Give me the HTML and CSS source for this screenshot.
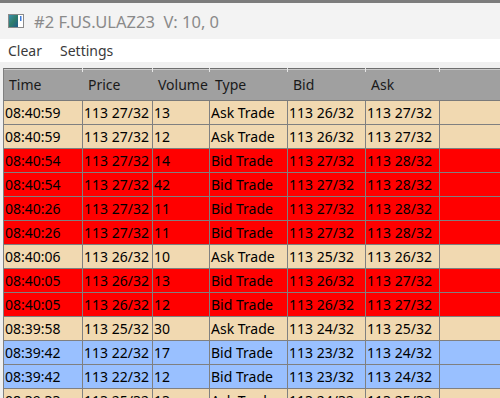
FILE: index.html
```html
<!DOCTYPE html>
<html>
<head>
<meta charset="utf-8">
<link rel="stylesheet" href="styles.css">
</head>
<body>
<div class="window">
  <div class="titlebar">
    <svg class="app-icon" width="16" height="16" viewBox="0 0 16 16">
      <defs>
        <linearGradient id="g" x1="0" y1="0" x2="1" y2="1">
          <stop offset="0" stop-color="#3a8fb0"/>
          <stop offset="0.5" stop-color="#2f7d6a"/>
          <stop offset="1" stop-color="#1f5a8c"/>
        </linearGradient>
      </defs>
      <rect x="0.5" y="1.5" width="15" height="13" fill="#fff" stroke="#8a8a8a"/>
      <rect x="1" y="2" width="9" height="12" fill="url(#g)"/>
      <rect x="12" y="3" width="1.5" height="5" fill="#3d7bd9"/>
    </svg>
    <span class="title">#2 F.US.ULAZ23&nbsp;&nbsp;V: 10, 0</span>
  </div>
  <div class="menubar">
    <span class="menu-item">Clear</span>
    <span class="menu-item">Settings</span>
  </div>
  <div class="gap-strip"></div>
  <div class="grid-wrap">
    <div class="grid">
      <div class="row head">
        <div class="cell">Time</div><div class="cell">Price</div><div class="cell">Volume</div><div class="cell">Type</div><div class="cell">Bid</div><div class="cell">Ask</div><div class="cell fill"></div>
      </div>
      <div class="row ask"><div class="cell">08:40:59</div><div class="cell">113 27/32</div><div class="cell">13</div><div class="cell">Ask Trade</div><div class="cell">113 26/32</div><div class="cell">113 27/32</div><div class="cell fill"></div></div>
      <div class="row ask"><div class="cell">08:40:59</div><div class="cell">113 27/32</div><div class="cell">12</div><div class="cell">Ask Trade</div><div class="cell">113 26/32</div><div class="cell">113 27/32</div><div class="cell fill"></div></div>
      <div class="row bid"><div class="cell">08:40:54</div><div class="cell">113 27/32</div><div class="cell">14</div><div class="cell">Bid Trade</div><div class="cell">113 27/32</div><div class="cell">113 28/32</div><div class="cell fill"></div></div>
      <div class="row bid"><div class="cell">08:40:54</div><div class="cell">113 27/32</div><div class="cell">42</div><div class="cell">Bid Trade</div><div class="cell">113 27/32</div><div class="cell">113 28/32</div><div class="cell fill"></div></div>
      <div class="row bid"><div class="cell">08:40:26</div><div class="cell">113 27/32</div><div class="cell">11</div><div class="cell">Bid Trade</div><div class="cell">113 27/32</div><div class="cell">113 28/32</div><div class="cell fill"></div></div>
      <div class="row bid"><div class="cell">08:40:26</div><div class="cell">113 27/32</div><div class="cell">11</div><div class="cell">Bid Trade</div><div class="cell">113 27/32</div><div class="cell">113 28/32</div><div class="cell fill"></div></div>
      <div class="row ask"><div class="cell">08:40:06</div><div class="cell">113 26/32</div><div class="cell">10</div><div class="cell">Ask Trade</div><div class="cell">113 25/32</div><div class="cell">113 26/32</div><div class="cell fill"></div></div>
      <div class="row bid"><div class="cell">08:40:05</div><div class="cell">113 26/32</div><div class="cell">13</div><div class="cell">Bid Trade</div><div class="cell">113 26/32</div><div class="cell">113 27/32</div><div class="cell fill"></div></div>
      <div class="row bid"><div class="cell">08:40:05</div><div class="cell">113 26/32</div><div class="cell">12</div><div class="cell">Bid Trade</div><div class="cell">113 26/32</div><div class="cell">113 27/32</div><div class="cell fill"></div></div>
      <div class="row ask"><div class="cell">08:39:58</div><div class="cell">113 25/32</div><div class="cell">30</div><div class="cell">Ask Trade</div><div class="cell">113 24/32</div><div class="cell">113 25/32</div><div class="cell fill"></div></div>
      <div class="row low"><div class="cell">08:39:42</div><div class="cell">113 22/32</div><div class="cell">17</div><div class="cell">Bid Trade</div><div class="cell">113 23/32</div><div class="cell">113 24/32</div><div class="cell fill"></div></div>
      <div class="row low"><div class="cell">08:39:42</div><div class="cell">113 22/32</div><div class="cell">12</div><div class="cell">Bid Trade</div><div class="cell">113 23/32</div><div class="cell">113 24/32</div><div class="cell fill"></div></div>
      <div class="row ask"><div class="cell">08:39:33</div><div class="cell">113 25/32</div><div class="cell">13</div><div class="cell">Ask Trade</div><div class="cell">113 24/32</div><div class="cell">113 25/32</div><div class="cell fill"></div></div>
    </div>
  </div>
</div>
</body>
</html>
```
FILE: styles.css
```css
html, body {
  margin: 0;
  padding: 0;
  height: 100%;
  overflow: hidden;
  background: #f0f0f0;
}
.window {
  font-family: "Noto Sans", "Open Sans", sans-serif;
  font-size: 14px;
  border-top: 3px solid #7c7c7c;
}
.titlebar {
  height: 36px;
  background: #f3f3f3;
  display: flex;
  align-items: center;
  padding-left: 8px;
  gap: 10px;
}
.app-icon {
  display: block;
}
.title {
  color: #8a8a8a;
  font-size: 16.5px;
  white-space: pre;
}
.menubar {
  height: 23px;
  background: #ffffff;
  display: flex;
  align-items: center;
  padding-left: 8px;
  gap: 18px;
}
.menu-item {
  color: #3a3a3a;
  font-size: 14px;
}
.gap-strip {
  height: 6px;
  background: #f0f0f0;
}
.grid-wrap {
  padding-left: 3px;
}
.grid {
  border-left: 1px solid #808080;
  border-top: 1px solid #6e6e6e;
}
.row {
  display: grid;
  grid-template-columns: 79px 70px 57px 78px 78px 74px 1fr;
  height: 24px;
}
.cell {
  border-right: 1px solid #808080;
  border-bottom: 1px solid #808080;
  padding-left: 1px;
  line-height: 23px;
  white-space: nowrap;
  overflow: hidden;
  color: #000;
}
.cell.fill {
  border-right: none;
}
.row.head {
  height: 31px;
  background: #a0a0a0;
  border-top: 1px solid #c8c8c8;
}
.row.head .cell {
  border-right: none;
  border-bottom: 1px solid #7a7a7a;
  padding-left: 5px;
  line-height: 29px;
  position: relative;
  overflow: visible;
  color: #1a1a1a;
}
.row.head .cell::after {
  content: "";
  position: absolute;
  right: 0;
  top: -2px;
  width: 1px;
  height: 4px;
  background: #e6e6e6;
}
.row.head .cell.fill::after {
  display: none;
}
.row.ask { background: #f1d9b1; }
.row.bid { background: #ff0000; }
.row.low { background: #99c0ff; }
```
